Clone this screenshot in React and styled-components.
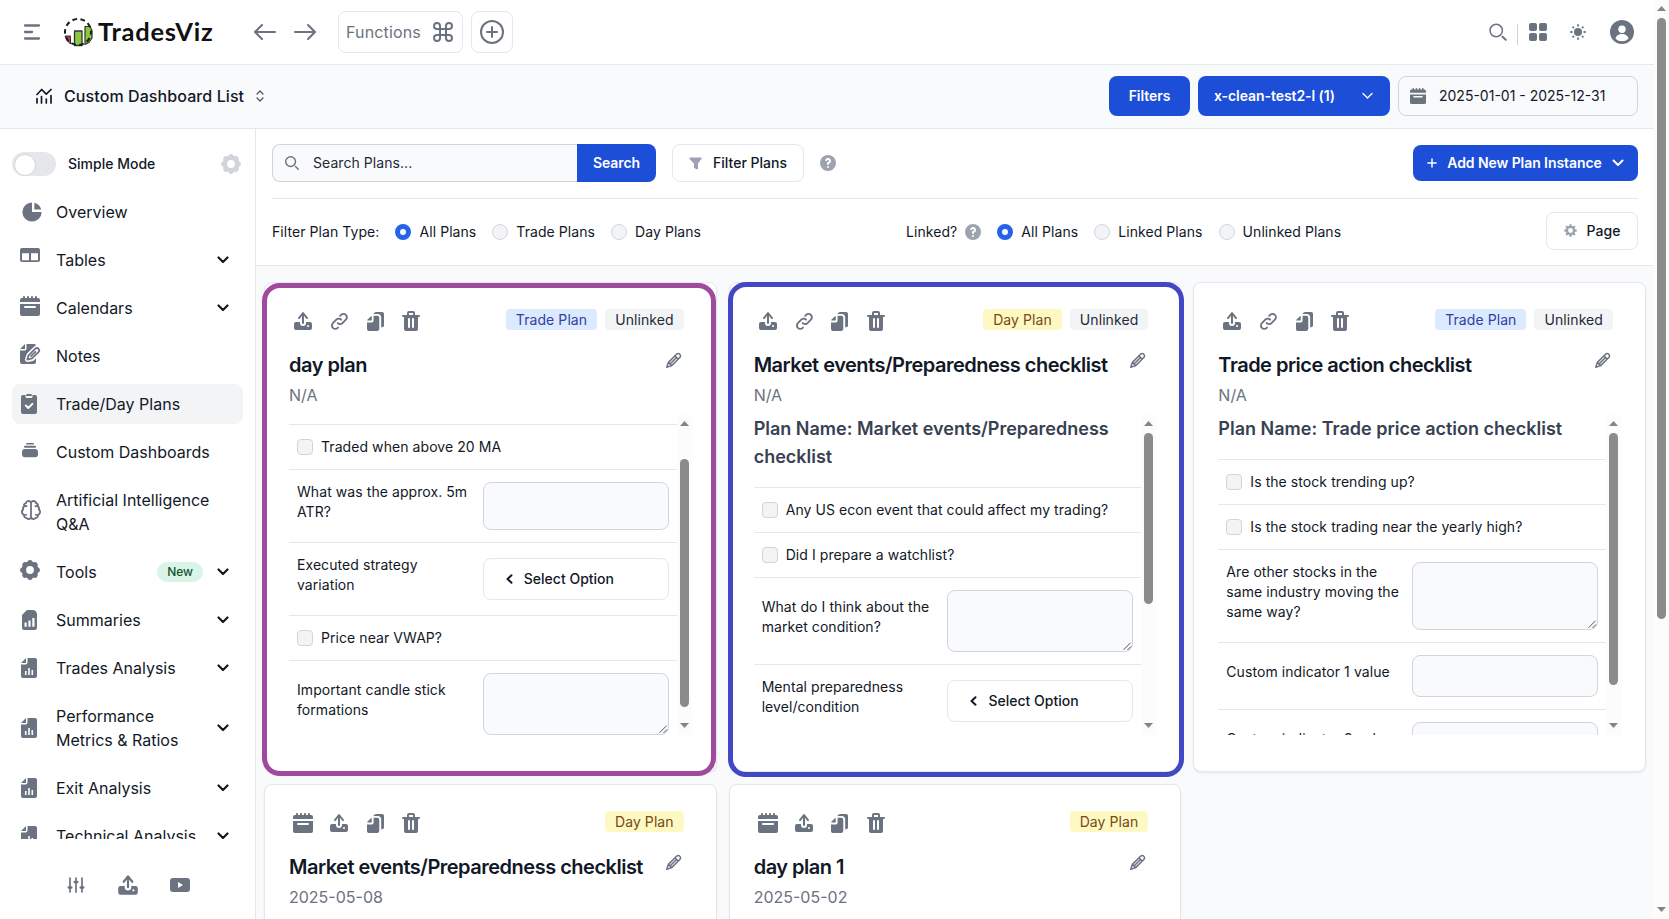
import { useState } from "react";
import styled, { createGlobalStyle } from "styled-components";
import { Command } from "lucide-react";

const GlobalStyle = createGlobalStyle`
  * {
    box-sizing: border-box;
  }
  body {
    margin: 0;
    overflow: hidden;
    background: #fff;
    color: #111827;
    font-family: Inter, "Liberation Sans", sans-serif;
    font-size: 14px;
    line-height: 20px;
  }
  button {
    font-family: inherit;
    font-size: inherit;
    line-height: inherit;
    cursor: pointer;
    margin: 0;
  }
  svg {
    display: block;
    flex: none;
  }
`;

/* ---------- layout ---------- */

const Window = styled.div`
  display: flex;
  width: 1669px;
  height: 919px;
  overflow: hidden;
`;

const Page = styled.div`
  display: flex;
  flex-direction: column;
  flex: 1;
  min-width: 0;
`;

const Header = styled.header`
  display: flex;
  align-items: center;
  flex: none;
  height: 65px;
  padding: 0 20px;
  border-bottom: 1px solid #e5e7eb;
  color: #6b7280;
`;

const SubBar = styled.div`
  display: flex;
  align-items: center;
  flex: none;
  height: 64px;
  padding: 0 16px 1px 36px;
  background: #f9fafc;
  border-bottom: 1px solid #e5e7eb;
`;

const Body = styled.div`
  display: flex;
  flex: 1;
  min-height: 0;
`;

const Spacer = styled.div`
  flex: 1;
`;

/* ---------- header ---------- */

const Logo = styled.div`
  display: flex;
  align-items: center;
  gap: 5px;
  width: 190px;
  margin-left: 19px;
`;

const LogoText = styled.span`
  font-family: Lato, sans-serif;
  font-weight: 700;
  font-size: 25.5px;
  line-height: 30px;
  letter-spacing: 0.75px;
  padding-bottom: 2px;
  color: #111;
`;

const NavArrows = styled.div`
  display: flex;
  gap: 16px;
  width: 85px;
`;

const HeaderButton = styled.button`
  display: flex;
  align-items: center;
  justify-content: center;
  gap: 10px;
  width: ${(props) => props.$width}px;
  height: 42px;
  margin-right: 8px;
  padding: 0;
  background: #fff;
  border: 1px solid #e5e7eb;
  border-radius: 8px;
  color: #6b7280;
  font-size: 16px;
  letter-spacing: 0.15px;
`;

const HeaderTools = styled.div`
  display: flex;
  align-items: center;
`;

const ToolSlot = styled.div`
  margin-left: ${(props) => props.$gap}px;
`;

const Divider = styled.div`
  width: 1px;
  height: 21px;
  margin: 5px 0 0 10px;
  background: #d1d5db;
`;

const DashboardTitle = styled.div`
  margin: 0 12px;
  font-size: 16px;
  line-height: 24px;
  font-weight: 500;
  letter-spacing: 0.09px;
`;

const BlueButton = styled.button`
  display: flex;
  align-items: center;
  width: ${(props) => props.$width}px;
  height: ${(props) => props.$height || 40}px;
  padding: 0 ${(props) => props.$pad || 16}px;
  justify-content: ${(props) => (props.$spread ? "space-between" : "center")};
  background: #1d4ed8;
  border: 0;
  border-radius: ${(props) => (props.$joined ? "0 8px 8px 0" : "8px")};
  color: #fff;
  font-weight: 600;
  letter-spacing: -0.07px;
  white-space: nowrap;
`;

const BarButtons = styled.div`
  display: flex;
  gap: 8px;
`;

const DateField = styled.div`
  display: flex;
  align-items: center;
  gap: 13px;
  width: 240px;
  height: 40px;
  padding-left: 11px;
  background: #f9fafc;
  border: 1px solid #d1d5db;
  border-radius: 8px;
  color: #111827;
  white-space: nowrap;
`;

/* ---------- sidebar ---------- */

const Sidebar = styled.aside`
  display: flex;
  flex-direction: column;
  flex: none;
  width: 256px;
  border-right: 1px solid #e5e7eb;
`;

const SidebarScroll = styled.div`
  flex: none;
  height: 710px;
  padding: 15px 12px 0;
  overflow: hidden;
`;

const SimpleMode = styled.div`
  display: flex;
  align-items: center;
  height: 40px;
  margin-bottom: 8px;
  padding-right: 2px;
  font-weight: 500;
`;

const Switch = styled.button`
  width: 44px;
  height: 24px;
  margin-right: 12px;
  padding: 2px;
  border: 0;
  border-radius: 12px;
  background: ${(props) => (props.$on ? "#1d4ed8" : "#e5e7eb")};

  &::after {
    content: "";
    display: block;
    width: 20px;
    height: 20px;
    margin-left: ${(props) => (props.$on ? 20 : 0)}px;
    border: 1px solid #d1d5db;
    border-radius: 50%;
    background: #fff;
  }
`;

const NavItem = styled.div`
  display: flex;
  align-items: center;
  width: 231px;
  min-height: 40px;
  margin-bottom: 8px;
  padding: 8px;
  border-radius: 8px;
  font-size: 16px;
  line-height: 24px;
  background: ${(props) => (props.$active ? "#f3f4f6" : "transparent")};
  color: #111827;
  cursor: pointer;

  > svg:first-child {
    color: #6b7280;
  }
`;

const NavLabel = styled.span`
  flex: 1;
  margin-left: 12px;
  white-space: pre-line;
`;

const NewBadge = styled.span`
  margin-right: 8px;
  padding: 0 10px;
  border-radius: 10px;
  background: #d9f5e8;
  color: #14532d;
  font-size: 12px;
  line-height: 20px;
  font-weight: 500;
`;

const SidebarFooter = styled.div`
  display: flex;
  justify-content: center;
  align-items: center;
  gap: 29px;
  padding: 33px 0 0;
  color: #6b7280;
`;

/* ---------- toolbar ---------- */

const Main = styled.main`
  display: flex;
  flex-direction: column;
  flex: 1;
  min-width: 0;
  background: #f9fafc;
`;

const Toolbar = styled.section`
  flex: none;
  height: 137px;
  padding: 0 16px;
  background: #fff;
  border-bottom: 1px solid #e5e7eb;
`;

const ToolbarRow = styled.div`
  display: flex;
  align-items: center;
  height: ${(props) => props.$height}px;
  padding-bottom: ${(props) => (props.$line ? 1 : 2)}px;
  border-bottom: ${(props) => (props.$line ? "1px solid #e5e7eb" : "0")};
`;

const SearchBox = styled.div`
  display: flex;
  align-items: center;
  gap: 14px;
  width: 305px;
  height: 38px;
  padding-left: 12px;
  background: #f9fafc;
  border: 1px solid #d1d5db;
  border-right: 0;
  border-radius: 8px 0 0 8px;
  color: #6b7280;
`;

const SearchInput = styled.input`
  flex: 1;
  min-width: 0;
  padding: 0;
  border: 0;
  outline: 0;
  background: transparent;
  font: inherit;
  letter-spacing: 0.06px;
  &::placeholder {
    color: #1f2937;
    opacity: 1;
  }
`;

const WhiteButton = styled.button`
  display: flex;
  align-items: center;
  justify-content: center;
  gap: ${(props) => props.$gap || 11}px;
  width: ${(props) => props.$width}px;
  height: 38px;
  padding: 0;
  background: #fff;
  border: 1px solid #e5e7eb;
  border-radius: 8px;
  color: #111827;
  font-weight: 500;

  svg {
    color: #9ca3af;
  }
`;

const Gap = styled.div`
  flex: none;
  width: ${(props) => props.$w}px;
`;

const RadioGroup = styled.div`
  display: flex;
  align-items: center;
  width: ${(props) => props.$width}px;
  padding-top: 2px;
  letter-spacing: 0.07px;
`;

const RadioLabel = styled.label`
  display: flex;
  align-items: center;
  gap: 8px;
  margin-right: 16px;
  white-space: nowrap;
`;

const Radio = styled.span`
  width: 16px;
  height: 16px;
  border-radius: 50%;
  background: ${(props) => (props.$on ? "#fff" : "#f3f4f6")};
  border: ${(props) => (props.$on ? "5px solid #2563eb" : "1px solid #d1d5db")};
`;

/* ---------- cards ---------- */

const CardGrid = styled.section`
  display: grid;
  grid-template-columns: repeat(3, 1fr);
  grid-auto-rows: 490px;
  gap: 12px;
  flex: 1;
  min-height: 0;
  padding: 16px 8px;
  overflow: hidden;
`;

const Card = styled.article`
  position: relative;
  min-width: 0;
  padding: 24px;
  background: #fff;
  border: 1px solid #e5e7eb;
  border-radius: 8px;
  box-shadow: 0 1px 2px rgba(0, 0, 0, 0.08);
`;

/* thick marker drawn over the card edge */
const Marker = styled.div`
  position: absolute;
  top: ${(props) => props.$top}px;
  bottom: ${(props) => props.$bottom}px;
  left: ${(props) => props.$left}px;
  right: ${(props) => props.$right}px;
  border: 5px solid ${(props) => props.$color};
  border-radius: 18px;
  pointer-events: none;
`;

const CardTop = styled.div`
  display: flex;
  align-items: flex-start;
  justify-content: space-between;
  height: 28px;
`;

const CardIcons = styled.div`
  display: flex;
  gap: 8px;
  color: #6b7280;
`;

const IconButton = styled.button`
  display: grid;
  place-items: center;
  width: 28px;
  height: 28px;
  padding: 0;
  border: 0;
  background: none;
  color: inherit;
`;

const Badges = styled.div`
  display: flex;
  gap: 8px;
  margin: 2px 8px 0 0;
`;

const tones = {
  "Trade Plan": ["#dbeafe", "#32409f"],
  "Day Plan": ["#fef9c3", "#774a16"],
  Unlinked: ["#f3f4f6", "#1f2937"],
};

const Badge = styled.span`
  height: 21px;
  padding: 0 10px;
  border-radius: 4px;
  line-height: 21px;
  letter-spacing: 0.08px;
  background: ${(props) => tones[props.$tone][0]};
  color: ${(props) => tones[props.$tone][1]};
`;

const TitleRow = styled.div`
  display: flex;
  justify-content: space-between;
  margin-top: 16px;
  padding-right: 10px;
  color: #6b7280;

  svg {
    margin-top: 1px;
  }
`;

const CardTitle = styled.h5`
  margin: 0;
  font-size: 20px;
  line-height: 28px;
  font-weight: 600;
  letter-spacing: -0.5px;
  white-space: nowrap;
  color: #111827;
`;

const CardDate = styled.div`
  margin: 4px 0 8px;
  font-size: 16px;
  line-height: 24px;
  color: #6b7280;
`;

const PlanArea = styled.div`
  display: flex;
  height: 320px;
  overflow: hidden;
`;

const PlanBody = styled.div`
  flex: 1;
  min-width: 0;
  padding-top: ${(props) => props.$offset || 0}px;
  letter-spacing: 0.07px;
`;

const PlanHeading = styled.h3`
  margin: 0 0 16px;
  font-size: 18px;
  line-height: 28px;
  font-weight: 600;
  letter-spacing: 0;
  color: #374151;
`;

const CheckRow = styled.label`
  display: flex;
  align-items: center;
  gap: 8px;
  height: 45px;
  padding: 0 8px;
  border-top: 1px solid #e5e7eb;
  white-space: nowrap;
`;

const CheckBox = styled.span`
  width: 16px;
  height: 16px;
  border: 1px solid #d1d5db;
  border-radius: 4px;
  background: #f3f4f6;
`;

const FieldRow = styled.div`
  display: grid;
  grid-template-columns: 1fr 1fr;
  align-items: center;
  padding: 12px 8px;
  border-top: 1px solid #e5e7eb;
`;

const FieldLabel = styled.span`
  padding: 0 8px 8px 0;
`;

const TextField = styled.div`
  align-self: stretch;
  min-height: ${(props) => (props.$area ? 62 : 42)}px;
  display: flex;
  align-items: flex-end;
  justify-content: flex-end;
  border: 1px solid #d1d5db;
  border-radius: 8px;
  background: #f9fafc;
`;

const SelectButton = styled.button`
  display: flex;
  align-items: center;
  gap: 11px;
  height: 42px;
  padding: 0 0 0 22px;
  border: 1px solid #e5e7eb;
  border-radius: 8px;
  background: #fff;
  color: #111827;
  font-weight: 500;
`;

/* ---------- scrollbar ---------- */

const Track = styled.div`
  display: flex;
  flex-direction: column;
  align-items: center;
  justify-content: space-between;
  position: relative;
  flex: none;
  width: 15px;
  padding: 6px 0 7px;
  background: #fcfcfc;
  color: #858585;
`;

const Thumb = styled.div`
  position: absolute;
  left: 3px;
  width: 9px;
  top: ${(props) => props.$top}px;
  height: ${(props) => props.$height}px;
  border-radius: 5px;
  background: #8b8b8b;
`;

/* ---------- icons ---------- */

const Svg = ({ w = 24, h = w, box, line, children }) => (
  <svg
    width={w}
    height={h}
    viewBox={box || `0 0 ${w} ${h}`}
    fill={line ? "none" : "currentColor"}
    stroke={line ? "currentColor" : "none"}
    strokeWidth={line}
    strokeLinecap="round"
    strokeLinejoin="round"
    fillRule="evenodd"
  >
    {children}
  </svg>
);

const Scrollbar = ({ top, height }) => (
  <Track>
    <Svg w={9} h={5}>
      <path d="M0 5h9L4.500 0z" />
    </Svg>
    <Thumb $top={top} $height={height} />
    <Svg w={9} h={5}>
      <path d="M0 0h9L4.500 5z" />
    </Svg>
  </Track>
);

const MenuIcon = () => (
  <Svg line={2.3}>
    <path d="M5 5.500h14M5 12h7M5 18.500h14" />
  </Svg>
);

const LogoMark = () => (
  <Svg w={30}>
    <path d="M2.500 19h5v8L4 23.500z" fill="#c8385a" stroke="#333" />
    <path d="M11.500 14H19v14.500h-7.500z" fill="#8cc63f" stroke="#333" strokeWidth="1.300" />
    <path d="M22 9.500h5l2 4v7.500l-3 4.500-4 2z" fill="#8cc63f" stroke="#333" strokeWidth="1.200" />
    <circle
      cx="15"
      cy="15"
      r="13"
      fill="none"
      stroke="#1b1b1b"
      strokeWidth="2"
      strokeDasharray="4.700 3.470"
      strokeDashoffset="2"
      strokeLinecap="butt"
    />
  </Svg>
);

const ArrowIcon = ({ right }) => (
  <Svg w={24} line={2.1}>
    <path d={right ? "M2 12h20M15 5l7 7-7 7" : "M22 12H2M9 5l-7 7 7 7"} />
  </Svg>
);

const PlusCircle = () => (
  <Svg line={2}>
    <circle cx="12" cy="12" r="11" />
    <path d="M12 7v10M7 12h10" />
  </Svg>
);

const HeaderSearch = () => (
  <Svg w={18} line={1.5}>
    <circle cx="7.200" cy="7.500" r="6.200" />
    <path d="M13.500 13.800l3.200 3" strokeWidth="2" />
  </Svg>
);

const SearchIcon = () => (
  <Svg w={14} box="0 0 20 20" line={2}>
    <path d="m19 19-4-4m0-7A7 7 0 1 1 1 8a7 7 0 0 1 14 0Z" />
  </Svg>
);

const GridIcon = () => (
  <Svg w={18}>
    <rect x="0" y="0" width="8" height="8" rx="2" />
    <rect x="10" y="0" width="8" height="8" rx="2" />
    <rect x="0" y="10" width="8" height="8" rx="2" />
    <rect x="10" y="10" width="8" height="8" rx="2" />
  </Svg>
);

const SunIcon = () => (
  <Svg w={16} line={1.8}>
    <circle cx="8" cy="8" r="4" fill="currentColor" stroke="none" />
    <path d="M8 1v.8M8 14.200v.8M1 8h.8M14.200 8h.8M3.100 3.100l.5.5M12.400 12.400l.5.5M3.100 12.900l.5-.5M12.400 3.600l.5-.5" />
  </Svg>
);

const UserIcon = () => (
  <Svg w={24}>
    <circle cx="12" cy="12" r="12" />
    <circle cx="12" cy="9.300" r="3.700" fill="#fff" />
    <path d="M5.500 18.800a6.500 4.800 0 0 1 13 0A9.500 9.500 0 0 1 12 21.300a9.500 9.500 0 0 1-6.500-2.500z" fill="#fff" />
  </Svg>
);

const ChartIcon = () => (
  <Svg w={16} line={1.7}>
    <path d="M1 15V10.500M5.500 15V8.500M10.300 15v-4M15 15V7.500M1 6.500 5.700 1.500l4.600 4.600L15 1.500" />
  </Svg>
);

const SelectorIcon = () => (
  <Svg w={8} h={12} line={1.3}>
    <path d="M1 4l3-3 3 3M1 8l3 3 3-3" stroke="#4b5563" />
  </Svg>
);

const Chevron = ({ w = 12, thick = 2.2, left }) => (
  <Svg w={left ? 7 : w} h={left ? 10 : 8} box={left ? "0 0 7 10" : "0 0 12 8"} line={thick}>
    <path d={left ? "M5.500 1.200 1.500 5l4 3.800" : "M1.500 1.500 6 6l4.500-4.500"} />
  </Svg>
);

const CalendarIcon = ({ w = 20 }) => (
  <Svg w={w} box="0 0 20 20">
    <path d="M0 18a2 2 0 0 0 2 2h16a2 2 0 0 0 2-2V8H0v10Zm5-8h10a1 1 0 0 1 0 2H5a1 1 0 0 1 0-2Zm13-8h-1V1a1 1 0 0 0-2 0v1h-2V1a1 1 0 0 0-2 0v1H9V1a1 1 0 0 0-2 0v1H5V1a1 1 0 0 0-2 0v1H2a2 2 0 0 0-2 2v2h20V4a2 2 0 0 0-2-2Z" />
  </Svg>
);

const GearIcon = ({ w = 20 }) => (
  <Svg w={w} box="0 0 20 20">
    <circle cx="10" cy="10" r="6.200" fill="none" stroke="currentColor" strokeWidth="4.600" />
    {[0, 45, 90, 135, 180, 225, 270, 315].map((a) => (
      <circle key={a} cx="10" cy="2.700" r="2.600" transform={`rotate(${a} 10 10)`} />
    ))}
  </Svg>
);

const CogIcon = () => (
  <Svg w={13} box="0 0 20 20">
    <circle cx="10" cy="10" r="5.500" fill="none" stroke="currentColor" strokeWidth="3.600" />
    {[0, 45, 90, 135, 180, 225, 270, 315].map((a) => (
      <rect key={a} x="8.200" y="0.500" width="3.600" height="4" rx="0.8" transform={`rotate(${a} 10 10)`} />
    ))}
  </Svg>
);

const FunnelIcon = () => (
  <Svg w={13}>
    <path d="M1.200.5h10.600c.8 0 1.100.9.600 1.500L9 6.500v5c0 .8-.6 1.200-1.300.8L5 11V6.500L.6 2C.1 1.400.4.500 1.200.5z" />
  </Svg>
);

const HelpIcon = () => (
  <Svg w={16} box="2 2 16 16">
    <path
      fill="#9ca3af"
      d="M18 10a8 8 0 11-16 0 8 8 0 0116 0zm-8-3a1 1 0 00-.867.5 1 1 0 11-1.731-1A3 3 0 0113 8a3.001 3.001 0 01-2 2.830V11a1 1 0 11-2 0v-1a1 1 0 011-1 1 1 0 100-2zm0 8a1 1 0 100-2 1 1 0 000 2z"
    />
  </Svg>
);

const PlusIcon = () => (
  <Svg w={10} line={1.5}>
    <path d="M5 .9v8.200M.9 5h8.200" />
  </Svg>
);

const UploadIcon = ({ w = 24 }) => (
  <Svg w={w} box="0 0 24 24">
    <path d="M12 3a1 1 0 0 1 .78.375l4 5a1 1 0 1 1-1.56 1.25L13 6.850V14a1 1 0 1 1-2 0V6.850L8.780 9.626a1 1 0 1 1-1.560-1.250l4-5A1 1 0 0 1 12 3ZM9 14v-1H5a2 2 0 0 0-2 2v4a2 2 0 0 0 2 2h14a2 2 0 0 0 2-2v-4a2 2 0 0 0-2-2h-4v1a3 3 0 1 1-6 0Zm8 2a1 1 0 1 0 0 2h.01a1 1 0 1 0 0-2H17Z" />
  </Svg>
);

const LinkIcon = () => (
  <Svg line={1.9}>
    <path d="M13.213 9.787a3.391 3.391 0 0 0-4.795 0l-3.425 3.426a3.390 3.390 0 0 0 4.795 4.794l.321-.304m-.321-4.490a3.390 3.390 0 0 0 4.795 0l3.424-3.426a3.390 3.390 0 0 0-4.794-4.795l-1.028.961" transform="translate(.9 .9)" />
  </Svg>
);

const CopyIcon = () => (
  <Svg w={17} h={19} box="0 0 18 20">
    <path d="M5 9V4.130a2.960 2.960 0 0 0-1.293.749L.879 7.707A2.960 2.960 0 0 0 .13 9H5Zm11.066-9H9.829a2.980 2.980 0 0 0-2.122.879L7 1.584A.987.987 0 0 0 6.766 2h4.300A3.972 3.972 0 0 1 15 6v10h1.066A1.970 1.970 0 0 0 18 14V2a1.970 1.970 0 0 0-1.934-2Z" />
    <path d="M11.066 4H7v5a2 2 0 0 1-2 2H0v7a1.969 1.969 0 0 0 1.933 2h9.133A1.970 1.970 0 0 0 13 18V6a1.970 1.970 0 0 0-1.934-2Z" />
  </Svg>
);

const TrashIcon = () => (
  <Svg w={18} h={20}>
    <path d="M17 4h-4V2a2 2 0 0 0-2-2H7a2 2 0 0 0-2 2v2H1a1 1 0 0 0 0 2h1v12a2 2 0 0 0 2 2h10a2 2 0 0 0 2-2V6h1a1 1 0 1 0 0-2ZM7 2h4v2H7V2Zm1 14a1 1 0 1 1-2 0V8a1 1 0 0 1 2 0v8Zm4 0a1 1 0 0 1-2 0V8a1 1 0 0 1 2 0v8Z" />
  </Svg>
);

const PencilIcon = () => (
  <Svg w={16} box="0 0 21 21" line={2}>
    <path d="M7.418 17.861 1 20l2.139-6.418m4.279 4.279 10.700-10.700a3.027 3.027 0 0 0-2.140-5.165c-.802 0-1.571.319-2.139.886l-10.700 10.700m4.279 4.279-4.279-4.279m2.139 2.140 7.844-7.844m-1.426-2.853 4.279 4.279" />
  </Svg>
);

const GripIcon = () => (
  <Svg w={9} line={1}>
    <path d="M.800 7.500 7.300 1M4.800 7.700 7.800 4.700" stroke="#555" />
  </Svg>
);

/* sidebar icons share a 24px slot */
const PieIcon = () => (
  <Svg box="0 0 20 20">
    <path d="M2 10a8 8 0 018-8v8h8a8 8 0 11-16 0z" />
    <path d="M12 2.252A8.014 8.014 0 0117.748 8H12V2.252z" />
  </Svg>
);

const TableIcon = () => (
  <Svg>
    <path d="M2 0h16a2 2 0 0 1 2 2v10a2 2 0 0 1-2 2H2a2 2 0 0 1-2-2V2a2 2 0 0 1 2-2zM2 5.200v7h7v-7zm9 0v7h7v-7z" />
  </Svg>
);

const SideCalendar = () => (
  <Svg box="0 0 24 24">
    <CalendarIcon />
  </Svg>
);

const NotesIcon = () => (
  <Svg>
    <path d="M5 0v5H0zM6.500 0H14a2 2 0 0 1 2 2v16a2 2 0 0 1-2 2H2a2 2 0 0 1-2-2V6.500h4.500a2 2 0 0 0 2-2z" />
    <path d="M7.500 15.500 9 11l6.500-6.300a2.400 2.400 0 0 1 3.400 3.400L12.300 14.500z" fill="none" stroke="#fff" strokeWidth="5" />
    <path d="M7.300 15.600 8.600 11.300l6.600-6.500a2.300 2.300 0 0 1 3.300 3.300L12 14.400zM11 12.200l4.500-4.400" fill="none" stroke="currentColor" strokeWidth="1.700" />
  </Svg>
);

const ClipboardIcon = () => (
  <Svg>
    <path d="M3 3h2.500v1.500A1.500 1.500 0 0 0 7 6h4a1.500 1.500 0 0 0 1.500-1.500V3H15a2 2 0 0 1 2 2v15a2 2 0 0 1-2 2H3a2 2 0 0 1-2-2V5a2 2 0 0 1 2-2z" />
    <path d="M7 2h4a.8.8 0 0 1 .8.800V4H6.200V2.800A.8.8 0 0 1 7 2z" />
    <path d="M5.800 13.500 8.200 16l4.200-4.200" fill="none" stroke="#fff" strokeWidth="1.900" />
  </Svg>
);

const StackIcon = () => (
  <Svg>
    <rect x="6" y="3" width="8" height="1.500" rx=".7" />
    <rect x="4" y="5.700" width="12" height="2" rx="1" />
    <rect x="2" y="9" width="16" height="8.300" rx="3" />
  </Svg>
);

const BrainIcon = () => (
  <Svg box="1 2 24 24" line={1.8}>
    <path d="M12 18.500A2.493 2.493 0 0 1 7.510 20H7.500a2.468 2.468 0 0 1-2.400-3.154 2.980 2.980 0 0 1-.85-5.274 2.468 2.468 0 0 1 .92-3.182 2.477 2.477 0 0 1 1.876-3.344 2.500 2.500 0 0 1 3.410-1.856A2.500 2.500 0 0 1 12 5.500m0 13v-13m0 13a2.493 2.493 0 0 0 4.490 1.500h.01a2.468 2.468 0 0 0 2.403-3.154 2.980 2.980 0 0 0 .847-5.274 2.468 2.468 0 0 0-.921-3.182 2.477 2.477 0 0 0-1.875-3.344A2.500 2.500 0 0 0 14.500 3 2.500 2.500 0 0 0 12 5.500m-8 5a2.500 2.500 0 0 1 3.480-2.300m-.28 8.551a3 3 0 0 1-2.953-5.185M20 10.500a2.500 2.500 0 0 0-3.481-2.300m.28 8.551a3 3 0 0 0 2.954-5.185" />
  </Svg>
);

const ToolsIcon = () => (
  <Svg box="0 0 24 24">
    <GearIcon />
  </Svg>
);

const SummaryIcon = () => (
  <Svg>
    <path d="M7 2h5.500A4.500 4.500 0 0 1 17 6.500v13a2.500 2.500 0 0 1-2.500 2.500h-10A2.500 2.500 0 0 1 2 19.500V7z" />
    <path d="M5.600 14.500v4.300M9.500 12.500v6.300M13.400 10v8.800" stroke="#fff" strokeWidth="2.200" strokeLinecap="butt" />
  </Svg>
);

const ReportIcon = () => (
  <Svg>
    <path d="M6 2v5H1zM7.500 2H15a2 2 0 0 1 2 2v16a2 2 0 0 1-2 2H3a2 2 0 0 1-2-2V8.500h4.500a2 2 0 0 0 2-2z" />
    <path d="M5.700 15v4M9 12v7M12.300 14v5" stroke="#fff" strokeWidth="1.600" strokeLinecap="butt" />
  </Svg>
);

const SlidersIcon = () => (
  <Svg w={20} line={1.7}>
    <path d="M4 3v14M10 3v14M16 3v14" />
    <path d="M2.800 12.500h2.400M8.800 7h2.400M14.800 12.500h2.400" strokeWidth="2.600" />
  </Svg>
);

const VideoIcon = () => (
  <Svg w={20} h={14}>
    <path d="M3 0h14a3 3 0 0 1 3 3v8a3 3 0 0 1-3 3H3a3 3 0 0 1-3-3V3a3 3 0 0 1 3-3zm5 4v6l5-3z" />
  </Svg>
);

/* ---------- data ---------- */

const navItems = [
  { label: "Overview", icon: PieIcon },
  { label: "Tables", icon: TableIcon, open: true },
  { label: "Calendars", icon: SideCalendar, open: true },
  { label: "Notes", icon: NotesIcon },
  { label: "Trade/Day Plans", icon: ClipboardIcon },
  { label: "Custom Dashboards", icon: StackIcon },
  { label: "Artificial Intelligence\nQ&A", icon: BrainIcon },
  { label: "Tools", icon: ToolsIcon, open: true, badge: "New" },
  { label: "Summaries", icon: SummaryIcon, open: true },
  { label: "Trades Analysis", icon: ReportIcon, open: true },
  { label: "Performance\nMetrics & Ratios", icon: ReportIcon, open: true },
  { label: "Exit Analysis", icon: ReportIcon, open: true },
  { label: "Technical Analysis", icon: ReportIcon, open: true },
];

const plans = [
  {
    title: "day plan",
    date: "N/A",
    badges: ["Trade Plan", "Unlinked"],
    marker: { $color: "#a04a9e", $top: 0, $bottom: -5, $left: -3, $right: -0.5 },
    offset: 9,
    bar: { top: 44, height: 248 },
    rows: [
      { type: "check", label: "Traded when above 20 MA" },
      { type: "text", label: "What was the approx. 5m ATR?" },
      { type: "select", label: "Executed strategy variation" },
      { type: "check", label: "Price near VWAP?" },
      { type: "area", label: "Important candle stick formations" },
    ],
  },
  {
    title: "Market events/Preparedness checklist",
    date: "N/A",
    badges: ["Day Plan", "Unlinked"],
    marker: { $color: "#4147c5", $top: -1, $bottom: -6, $left: -2, $right: -4 },
    heading: true,
    bar: { top: 18, height: 171 },
    rows: [
      { type: "check", label: "Any US econ event that could affect my trading?" },
      { type: "check", label: "Did I prepare a watchlist?" },
      { type: "area", label: "What do I think about the market condition?" },
      { type: "select", label: "Mental preparedness level/condition" },
    ],
  },
  {
    title: "Trade price action checklist",
    date: "N/A",
    badges: ["Trade Plan", "Unlinked"],
    heading: true,
    bar: { top: 18, height: 252 },
    rows: [
      { type: "check", label: "Is the stock trending up?" },
      { type: "check", label: "Is the stock trading near the yearly high?" },
      { type: "area", label: "Are other stocks in the same industry moving the same way?" },
      { type: "text", label: "Custom indicator 1 value" },
      { type: "text", label: "Custom indicator 2 value" },
    ],
  },
  {
    title: "Market events/Preparedness checklist",
    date: "2025-05-08",
    badges: ["Day Plan"],
    dated: true,
    rows: [],
  },
  {
    title: "day plan 1",
    date: "2025-05-02",
    badges: ["Day Plan"],
    dated: true,
    rows: [],
  },
];

/* ---------- components ---------- */

const PlanRow = ({ type, label }) => {
  if (type === "check") {
    return (
      <CheckRow>
        <CheckBox />
        {label}
      </CheckRow>
    );
  }
  return (
    <FieldRow>
      <FieldLabel>{label}</FieldLabel>
      {type === "select" ? (
        <SelectButton>
          <Chevron left thick={2} />
          Select Option
        </SelectButton>
      ) : (
        <TextField $area={type === "area"}>{type === "area" && <GripIcon />}</TextField>
      )}
    </FieldRow>
  );
};

const PlanCard = ({ plan }) => (
  <Card>
    <CardTop>
      <CardIcons>
        {plan.dated && (
          <IconButton>
            <CalendarIcon />
          </IconButton>
        )}
        <IconButton>
          <UploadIcon />
        </IconButton>
        {!plan.dated && (
          <IconButton>
            <LinkIcon />
          </IconButton>
        )}
        <IconButton>
          <CopyIcon />
        </IconButton>
        <IconButton>
          <TrashIcon />
        </IconButton>
      </CardIcons>
      <Badges>
        {plan.badges.map((badge) => (
          <Badge key={badge} $tone={badge}>
            {badge}
          </Badge>
        ))}
      </Badges>
    </CardTop>
    <TitleRow>
      <CardTitle>{plan.title}</CardTitle>
      <PencilIcon />
    </TitleRow>
    <CardDate>{plan.date}</CardDate>
    <PlanArea>
      <PlanBody $offset={plan.offset}>
        {plan.heading && <PlanHeading>Plan Name: {plan.title}</PlanHeading>}
        {plan.rows.map((row) => (
          <PlanRow key={row.label} {...row} />
        ))}
      </PlanBody>
      {plan.bar && <Scrollbar {...plan.bar} />}
    </PlanArea>
    {plan.marker && <Marker {...plan.marker} />}
  </Card>
);

const Radios = ({ options, value, onChange }) =>
  options.map((option) => (
    <RadioLabel key={option} onClick={() => onChange(option)}>
      <Radio $on={option === value} />
      {option}
    </RadioLabel>
  ));

const App = () => {
  const [simple, setSimple] = useState(false);
  const [activeItem, setActiveItem] = useState("Trade/Day Plans");
  const [planType, setPlanType] = useState("All Plans");
  const [linked, setLinked] = useState("All Plans");

  return (
    <>
      <GlobalStyle />
      <Window>
        <Page>
          <Header>
            <MenuIcon />
            <Logo>
              <LogoMark />
              <LogoText>TradesViz</LogoText>
            </Logo>
            <NavArrows>
              <ArrowIcon />
              <ArrowIcon right />
            </NavArrows>
            <HeaderButton $width={125}>
              Functions
              <Command size={24} />
            </HeaderButton>
            <HeaderButton $width={42}>
              <PlusCircle />
            </HeaderButton>
            <Spacer />
            <HeaderTools>
              <HeaderSearch />
              <Divider />
              <ToolSlot $gap={11}>
                <GridIcon />
              </ToolSlot>
              <ToolSlot $gap={23}>
                <SunIcon />
              </ToolSlot>
              <ToolSlot $gap={24}>
                <UserIcon />
              </ToolSlot>
            </HeaderTools>
          </Header>

          <SubBar>
            <ChartIcon />
            <DashboardTitle>Custom Dashboard List</DashboardTitle>
            <SelectorIcon />
            <Spacer />
            <BarButtons>
              <BlueButton $width={81}>Filters</BlueButton>
              <BlueButton $width={192} $spread>
                x-clean-test2-l (1)
                <Chevron w={13} thick={1.4} />
              </BlueButton>
              <DateField>
                <Svg w={16} box="0 0 20 20">
                  <g color="#6b7280">
                    <CalendarIcon />
                  </g>
                </Svg>
                2025-01-01 - 2025-12-31
              </DateField>
            </BarButtons>
          </SubBar>

          <Body>
            <Sidebar>
              <SidebarScroll>
                <SimpleMode>
                  <Switch $on={simple} onClick={() => setSimple(!simple)} />
                  Simple Mode
                  <Spacer />
                  <Svg w={20}>
                    <g color="#d1d5db">
                      <GearIcon />
                    </g>
                  </Svg>
                </SimpleMode>
                {navItems.map(({ label, icon: Icon, open, badge }) => (
                  <NavItem
                    key={label}
                    $active={label === activeItem}
                    onClick={() => setActiveItem(label)}
                  >
                    <Icon />
                    <NavLabel>{label}</NavLabel>
                    {badge && <NewBadge>{badge}</NewBadge>}
                    {open && (
                      <ToolSlot $gap={6}>
                        <Svg w={18} h={8}>
                          <Chevron />
                        </Svg>
                      </ToolSlot>
                    )}
                  </NavItem>
                ))}
              </SidebarScroll>
              <SidebarFooter>
                <SlidersIcon />
                <UploadIcon w={26} />
                <VideoIcon />
              </SidebarFooter>
            </Sidebar>

            <Main>
              <Toolbar>
                <ToolbarRow $height={70} $line>
                  <SearchBox>
                    <SearchIcon />
                    <SearchInput placeholder="Search Plans..." />
                  </SearchBox>
                  <BlueButton $width={79} $height={38} $joined>
                    Search
                  </BlueButton>
                  <Gap $w={16} />
                  <WhiteButton $width={132}>
                    <FunnelIcon />
                    Filter Plans
                  </WhiteButton>
                  <Gap $w={16} />
                  <HelpIcon />
                  <Spacer />
                  <BlueButton $width={225} $height={36} $pad={14} $spread>
                    <PlusIcon />
                    Add New Plan Instance
                    <Chevron thick={2} />
                  </BlueButton>
                </ToolbarRow>
                <ToolbarRow $height={65}>
                  <RadioGroup $width={634}>
                    Filter Plan Type:
                    <Gap $w={16} />
                    <Radios
                      options={["All Plans", "Trade Plans", "Day Plans"]}
                      value={planType}
                      onChange={setPlanType}
                    />
                  </RadioGroup>
                  <RadioGroup>
                    Linked?
                    <Gap $w={8} />
                    <HelpIcon />
                    <Gap $w={16} />
                    <Radios
                      options={["All Plans", "Linked Plans", "Unlinked Plans"]}
                      value={linked}
                      onChange={setLinked}
                    />
                  </RadioGroup>
                  <Spacer />
                  <WhiteButton $width={92} $gap={10}>
                    <CogIcon />
                    Page
                  </WhiteButton>
                </ToolbarRow>
              </Toolbar>
              <CardGrid>
                {plans.map((plan, i) => (
                  <PlanCard key={i} plan={plan} />
                ))}
              </CardGrid>
            </Main>
          </Body>
        </Page>
        <Scrollbar top={18} height={601} />
      </Window>
    </>
  );
};

export default App;
